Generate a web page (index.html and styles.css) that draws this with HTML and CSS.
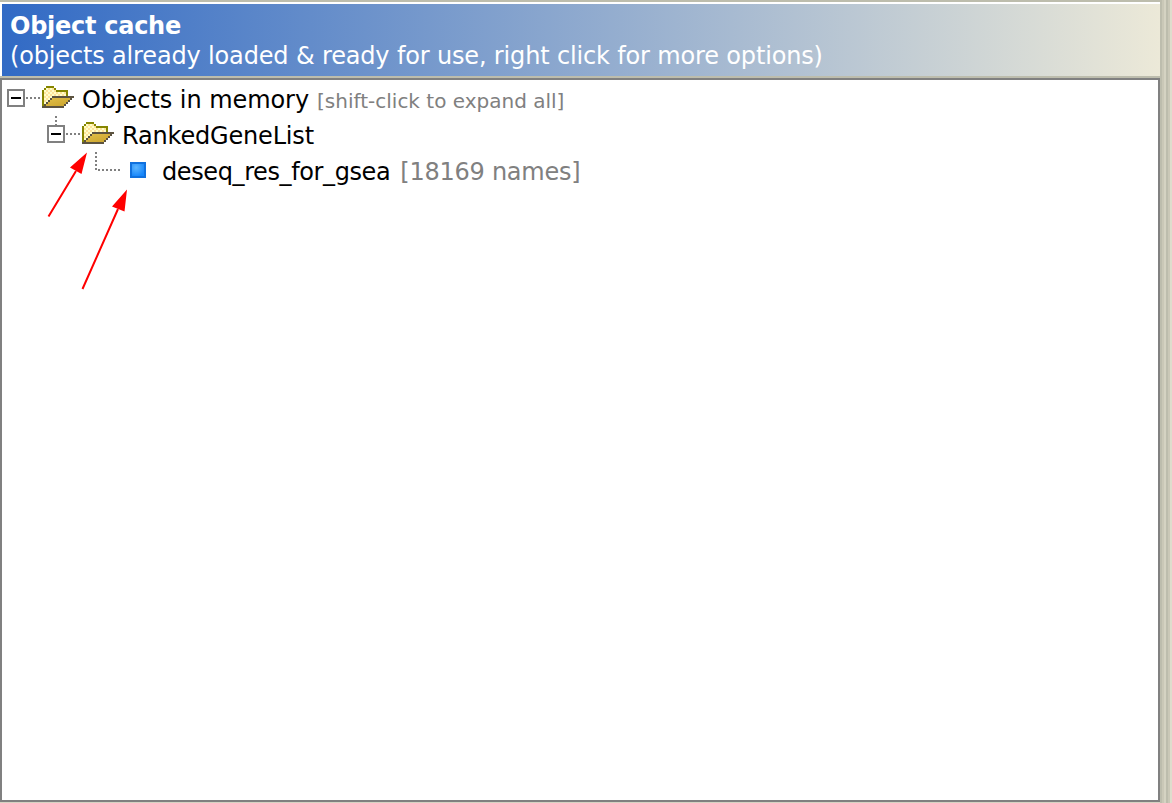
FILE: index.html
```html
<!DOCTYPE html>
<html lang="en">
<head>
<meta charset="utf-8">
<title>Object cache</title>
<link rel="stylesheet" href="styles.css">
</head>
<body>
<svg class="defs" width="0" height="0">
  <defs>
    <pattern id="dither" width="4" height="4" patternUnits="userSpaceOnUse" patternTransform="scale(.5)">
      <rect width="4" height="4" fill="#ffffc8"/><path d="M0 0h2v2H0zM2 2h2v2H2z" fill="#ffe39c"/>
    </pattern>
    <linearGradient id="flap" x1="0" y1="0" x2="1" y2="1"><stop offset="0" stop-color="#e2c04a"/><stop offset="1" stop-color="#cba42c"/></linearGradient>
    <symbol id="folder" viewBox="0 0 16 11">
      <path d="M1 2h1V1h4v1h6v4H5v1H4v1H3v1H2v1H1z" fill="url(#dither)"/>
      <path d="M2 0h4v1H2zM1 1h1v1H1zM6 1h1v1H6zM0 2h1v8H0zM7 2h6v1H7zM12 3h1v2h-1z" fill="#868600"/>
      <path d="M5 6h9v1h-1v1h-1v1h-1v1H1V9h1V8h1V7h2z" fill="url(#flap)"/>
      <path d="M5 5h11v1H5zM4 6h1v1H4zM3 7h1v1H3zM2 8h1v1H2zM1 9h1v1H1zM14 6h1v1h-1zM13 7h1v1h-1zM12 8h1v1h-1zM11 9h1v1h-1zM0 10h11v1H0z" fill="#5c5340"/>
    </symbol>
  </defs>
</svg>
<div class="window">
  <main class="panel">
    <header class="header">
      <h1 class="title">Object cache</h1>
      <p class="subtitle">(objects already loaded &amp; ready for use, right click for more options)</p>
    </header>
    <div class="tree">
      <div class="row">
        <span class="toggle"></span><span class="dots"></span>
        <svg class="folder" width="32" height="22" shape-rendering="crispEdges"><use href="#folder"/></svg>
        <span class="label root">Objects in memory</span><span class="hint">[shift-click to expand all]</span>
      </div>
      <div class="row level-1">
        <span class="stem"></span>
        <span class="toggle"></span><span class="dots"></span>
        <svg class="folder" width="32" height="22" shape-rendering="crispEdges"><use href="#folder"/></svg>
        <span class="label gene">RankedGeneList</span>
      </div>
      <div class="row level-2">
        <svg class="elbow" width="26" height="20"><path d="M1 0v18M3 18h23" fill="none" stroke="#808080" stroke-width="2" stroke-dasharray="2"/></svg>
        <span class="leaf"></span>
        <span class="label file">deseq_res_for_gsea</span><span class="count">[18169 names]</span>
      </div>
      <svg class="arrows" width="200" height="300">
        <path d="M48.500 216.500 76 171M82.500 289 118 209" stroke="#f00" stroke-width="2"/>
        <path d="M87 152.500 70 167.500 81.500 174zM127 189.500 112 206.500 124.500 211.500z" fill="#f00"/>
      </svg>
    </div>
  </main>
  <aside class="edge"></aside>
</div>
</body>
</html>
```
FILE: styles.css
```css
* { box-sizing: border-box; }
body { margin: 0; background: #fff; font-family: "DejaVu Sans", sans-serif; }
.defs { position: absolute; }
.window { display: flex; width: 1172px; height: 803px; overflow: hidden; background: #d6d3c3; }
.panel { width: 1160px; display: flex; flex-direction: column; }
.header {
  height: 78px; padding: 9px 0 0 10px; color: #fff;
  border-top: 2px solid #bdbdad; border-bottom: 2px solid #bdbdad;
  background: linear-gradient(#fff, #fff) 0 0 / 100% 2px no-repeat, linear-gradient(#fff, #fff) 0 0 / 2px 100% no-repeat, linear-gradient(90deg, #316ac5, #ece9d8);
}
.title, .subtitle { margin: 0; font-size: 24px; line-height: 30px; white-space: nowrap; }
.title { font-weight: 700; letter-spacing: -0.27px; }
.subtitle { font-weight: 400; letter-spacing: -0.155px; }
.tree { position: relative; height: 724px; background: #fff; border: 2px solid #808080; }
.row { position: relative; display: flex; height: 36px; align-items: center; padding-left: 5px; white-space: nowrap; }
.level-1 { padding-left: 45px; }
.level-2 { padding-left: 93px; }
.toggle {
  width: 18px; height: 18px; border: 2px solid #808080;
  background: linear-gradient(#000, #000) center / 10px 2px no-repeat #fff;
}
.dots { width: 15px; height: 2px; margin-right: 2px; background: repeating-linear-gradient(90deg, transparent 0 1px, #808080 1px 3px, transparent 3px 5px, #808080 5px 5px); background: repeating-linear-gradient(90deg, transparent 0 1px, #808080 1px 3px, transparent 3px 4px); }
.folder { display: block; margin-bottom: 2px; }
.stem { position: absolute; left: 53px; top: 0; width: 2px; height: 9px; background: repeating-linear-gradient(#808080 0 2px, transparent 2px 4px); }
.elbow { position: absolute; left: 93px; top: 0; }
.label { margin-left: 8px; padding-top: 4px; font-size: 24px; line-height: 32px; color: #000; }
.root { letter-spacing: -0.06px; }
.gene { letter-spacing: -0.18px; }
.file { margin-left: 16px; letter-spacing: -0.39px; }
.hint { margin-left: 8px; padding-top: 5px; font-size: 20px; color: #808080; }
.count { margin-left: 10px; padding-top: 4px; font-size: 24px; line-height: 32px; letter-spacing: -0.25px; color: #808080; }
.leaf { width: 16px; height: 16px; margin-left: 35px; border: 2px solid #1071de; background: radial-gradient(circle at 35% 30%, #5cb5ff, #1686fa 80%); }
.arrows { position: absolute; left: -2px; top: -80px; }
.edge { width: 12px; background: linear-gradient(90deg, #bdbdad 0 2px, #cac8b7 2px 4px, #d5d3c2 4px 6px, #bdbdad 6px 8px, #cac8b7 8px 10px, #deddcd 10px 12px); }
```
